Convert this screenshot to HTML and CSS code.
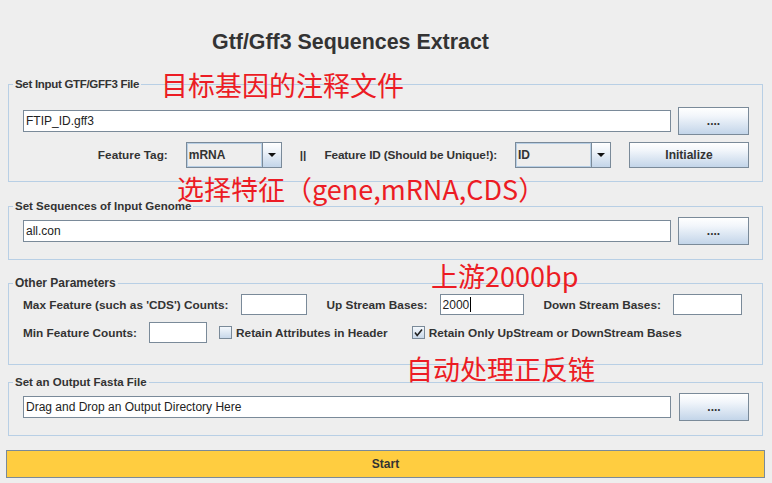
FILE: index.html
```html
<!DOCTYPE html>
<html>
<head>
<meta charset="utf-8">
<title>Gtf/Gff3 Sequences Extract</title>
<link rel="stylesheet" href="styles.css">
</head>
<body>
<div class="app">
  <h1 class="title">Gtf/Gff3 Sequences Extract</h1>

  <fieldset class="panel p-input">
    <legend class="lg-input">Set Input GTF/GFF3 File</legend>
    <div class="panel-body body-input">
      <div class="file-row">
        <div class="field wide">FTIP_ID.gff3</div>
        <button class="btn browse">....</button>
      </div>
      <div class="tag-row">
        <span class="lbl">Feature Tag:</span>
        <div class="combo"><span class="combo-val">mRNA</span><span class="combo-arrow"><i class="tri"></i></span></div>
        <span class="lbl">||</span>
        <span class="lbl fid">Feature ID (Should be Unique!):</span>
        <div class="combo"><span class="combo-val">ID</span><span class="combo-arrow"><i class="tri"></i></span></div>
        <button class="btn init">Initialize</button>
      </div>
    </div>
  </fieldset>

  <fieldset class="panel p-genome">
    <legend>Set Sequences of Input Genome</legend>
    <div class="panel-body body-std">
      <div class="file-row">
        <div class="field wide">all.con</div>
        <button class="btn browse">....</button>
      </div>
    </div>
  </fieldset>

  <fieldset class="panel p-params">
    <legend class="lg-params">Other Parameters</legend>
    <div class="panel-body body-params">
      <div class="param-row">
        <span class="lbl">Max Feature (such as 'CDS') Counts:</span>
        <div class="field small f-max"></div>
        <span class="lbl gap-l">Up Stream Bases:</span>
        <div class="field small f-up">2000<span class="caret"></span></div>
        <span class="lbl gap-l">Down Stream Bases:</span>
        <div class="field small f-down"></div>
      </div>
      <div class="param-row">
        <span class="lbl">Min Feature Counts:</span>
        <div class="field small f-min"></div>
        <label class="check c-attr"><span class="box"></span><span class="lbl">Retain Attributes in Header</span></label>
        <label class="check c-only"><span class="box checked"><svg viewBox="0 0 13 13" width="13" height="13"><path d="M3 6.5 L5.2 9.5 L10 3.5" fill="none" stroke="#222" stroke-width="1.6"/></svg></span><span class="lbl">Retain Only UpStream or DownStream Bases</span></label>
      </div>
    </div>
  </fieldset>

  <fieldset class="panel p-output">
    <legend>Set an Output Fasta File</legend>
    <div class="panel-body body-std">
      <div class="file-row out-row">
        <div class="field wide">Drag and Drop an Output Directory Here</div>
        <button class="btn browse">....</button>
      </div>
    </div>
  </fieldset>

  <button class="start">Start</button>

  <div class="note n1">目标基因的注释文件</div>
  <div class="note n2">选择特征（gene,mRNA,CDS）</div>
  <div class="note n3">上游2000bp</div>
  <div class="note n4">自动处理正反链</div>
</div>
</body>
</html>
```

FILE: styles.css
```css
html, body {
  margin: 0;
  background: #eeeeee;
  font-family: "Liberation Sans", Arial, sans-serif;
  color: #333333;
}

.app {
  position: relative;
  height: 483px;
  box-sizing: border-box;
  padding: 0 9px 0 8px;
  overflow: hidden;
}

.title {
  margin: 0 0 22px;
  padding: 30px 70px 0 0;
  font-size: 21.4px;
  line-height: 24px;
  font-weight: bold;
  text-align: center;
  color: #333333;
}

.panel {
  margin: 0;
  padding: 0;
  min-width: 0;
  border: 1px solid #b8cfe5;
}

.panel legend {
  margin-left: 4px;
  padding: 0 2px;
  font-size: 11.5px;
  line-height: 16px;
  font-weight: bold;
  color: #333333;
}

.panel .lg-input { letter-spacing: -0.3px; }
.panel .lg-params { font-size: 12px; }

.p-genome { margin-top: 16px; }
.p-params { margin-top: 15px; }
.p-output { margin-top: 9px; }

.body-input { padding: 15px 13px 13px 14px; }
.body-std { padding: 3px 13px 14px 14px; }
.body-params { padding: 3px 13px 21px 14px; }

.file-row {
  display: flex;
  align-items: center;
  gap: 7px;
  height: 28px;
}

.out-row { gap: 8px; }
.out-row .browse { width: 70px; }

.field {
  box-sizing: border-box;
  height: 22px;
  background: #ffffff;
  border: 1px solid #7a8a99;
  font-size: 12px;
  line-height: 20px;
  padding-left: 2px;
  color: #222222;
  white-space: nowrap;
}

.wide { flex: 1; }

.btn {
  box-sizing: border-box;
  height: 28px;
  border: 1px solid #7a8a99;
  background: linear-gradient(to bottom, #ffffff 0%, #f2f6fb 30%, #c3d5e9 100%);
  font-family: "Liberation Sans", Arial, sans-serif;
  font-size: 12px;
  font-weight: bold;
  color: #333333;
  padding: 0;
}

.browse { width: 71px; }

.tag-row {
  display: flex;
  align-items: center;
  justify-content: flex-end;
  gap: 18px;
  height: 26px;
  margin-top: 7px;
}

.init { width: 120px; height: 26px; }

.lbl {
  font-size: 11.8px;
  font-weight: bold;
  color: #333333;
  white-space: nowrap;
}

.fid { letter-spacing: -0.14px; }

.combo {
  box-sizing: border-box;
  display: flex;
  width: 96px;
  height: 26px;
  border: 1px solid #7a8a99;
}

.combo-val {
  flex: 1;
  border: 1px solid #b8cfe5;
  background: #eeeeee;
  font-size: 12px;
  font-weight: bold;
  line-height: 22px;
  padding-left: 1px;
  color: #333333;
}

.combo-arrow {
  width: 18px;
  border-left: 1px solid #7a8a99;
  background: linear-gradient(to bottom, #ffffff 0%, #eef3f9 35%, #c3d5e9 100%);
  display: flex;
  align-items: center;
  justify-content: center;
}

.tri {
  width: 0;
  height: 0;
  border-left: 4px solid transparent;
  border-right: 4px solid transparent;
  border-top: 4px solid #111111;
}

.param-row {
  display: flex;
  align-items: center;
  gap: 12px;
  height: 21px;
}

.param-row + .param-row { margin-top: 7px; }

.param-row .gap-l { margin-left: 8px; }

.small { height: 21px; }
.f-max { width: 66px; }
.f-up { width: 84px; display: flex; align-items: center; }
.f-down { width: 69px; }
.f-min { width: 58px; }

.caret {
  display: inline-block;
  width: 1px;
  height: 15px;
  background: #000000;
  margin-left: 1px;
}

.check {
  display: flex;
  align-items: center;
  gap: 4px;
}

.c-attr { margin-left: 0; }
.c-only { margin-left: 12px; }

.box {
  box-sizing: border-box;
  width: 13px;
  height: 13px;
  border: 1px solid #7a8a99;
  background: linear-gradient(to bottom, #f4f8fc 0%, #c8d8ea 100%);
  position: relative;
}

.box svg {
  position: absolute;
  left: -1px;
  top: -1px;
}

.start {
  display: block;
  box-sizing: border-box;
  width: calc(100% + 4px);
  margin: 14px -2px 0;
  height: 28px;
  border: 1px solid #7a8a99;
  background: #ffcd40;
  font-family: "Liberation Sans", Arial, sans-serif;
  font-size: 12px;
  font-weight: bold;
  color: #333333;
}

.note {
  position: absolute;
  color: #ec1c24;
  font-family: "Noto Sans CJK SC", "Noto Sans", sans-serif;
  font-size: 27px;
  line-height: 27px;
  white-space: nowrap;
}

.n1 { left: 161px; top: 71px; }
.n2 { left: 177px; top: 175px; }
.n3 { left: 431px; top: 262px; }
.n4 { left: 406px; top: 355px; }
```
